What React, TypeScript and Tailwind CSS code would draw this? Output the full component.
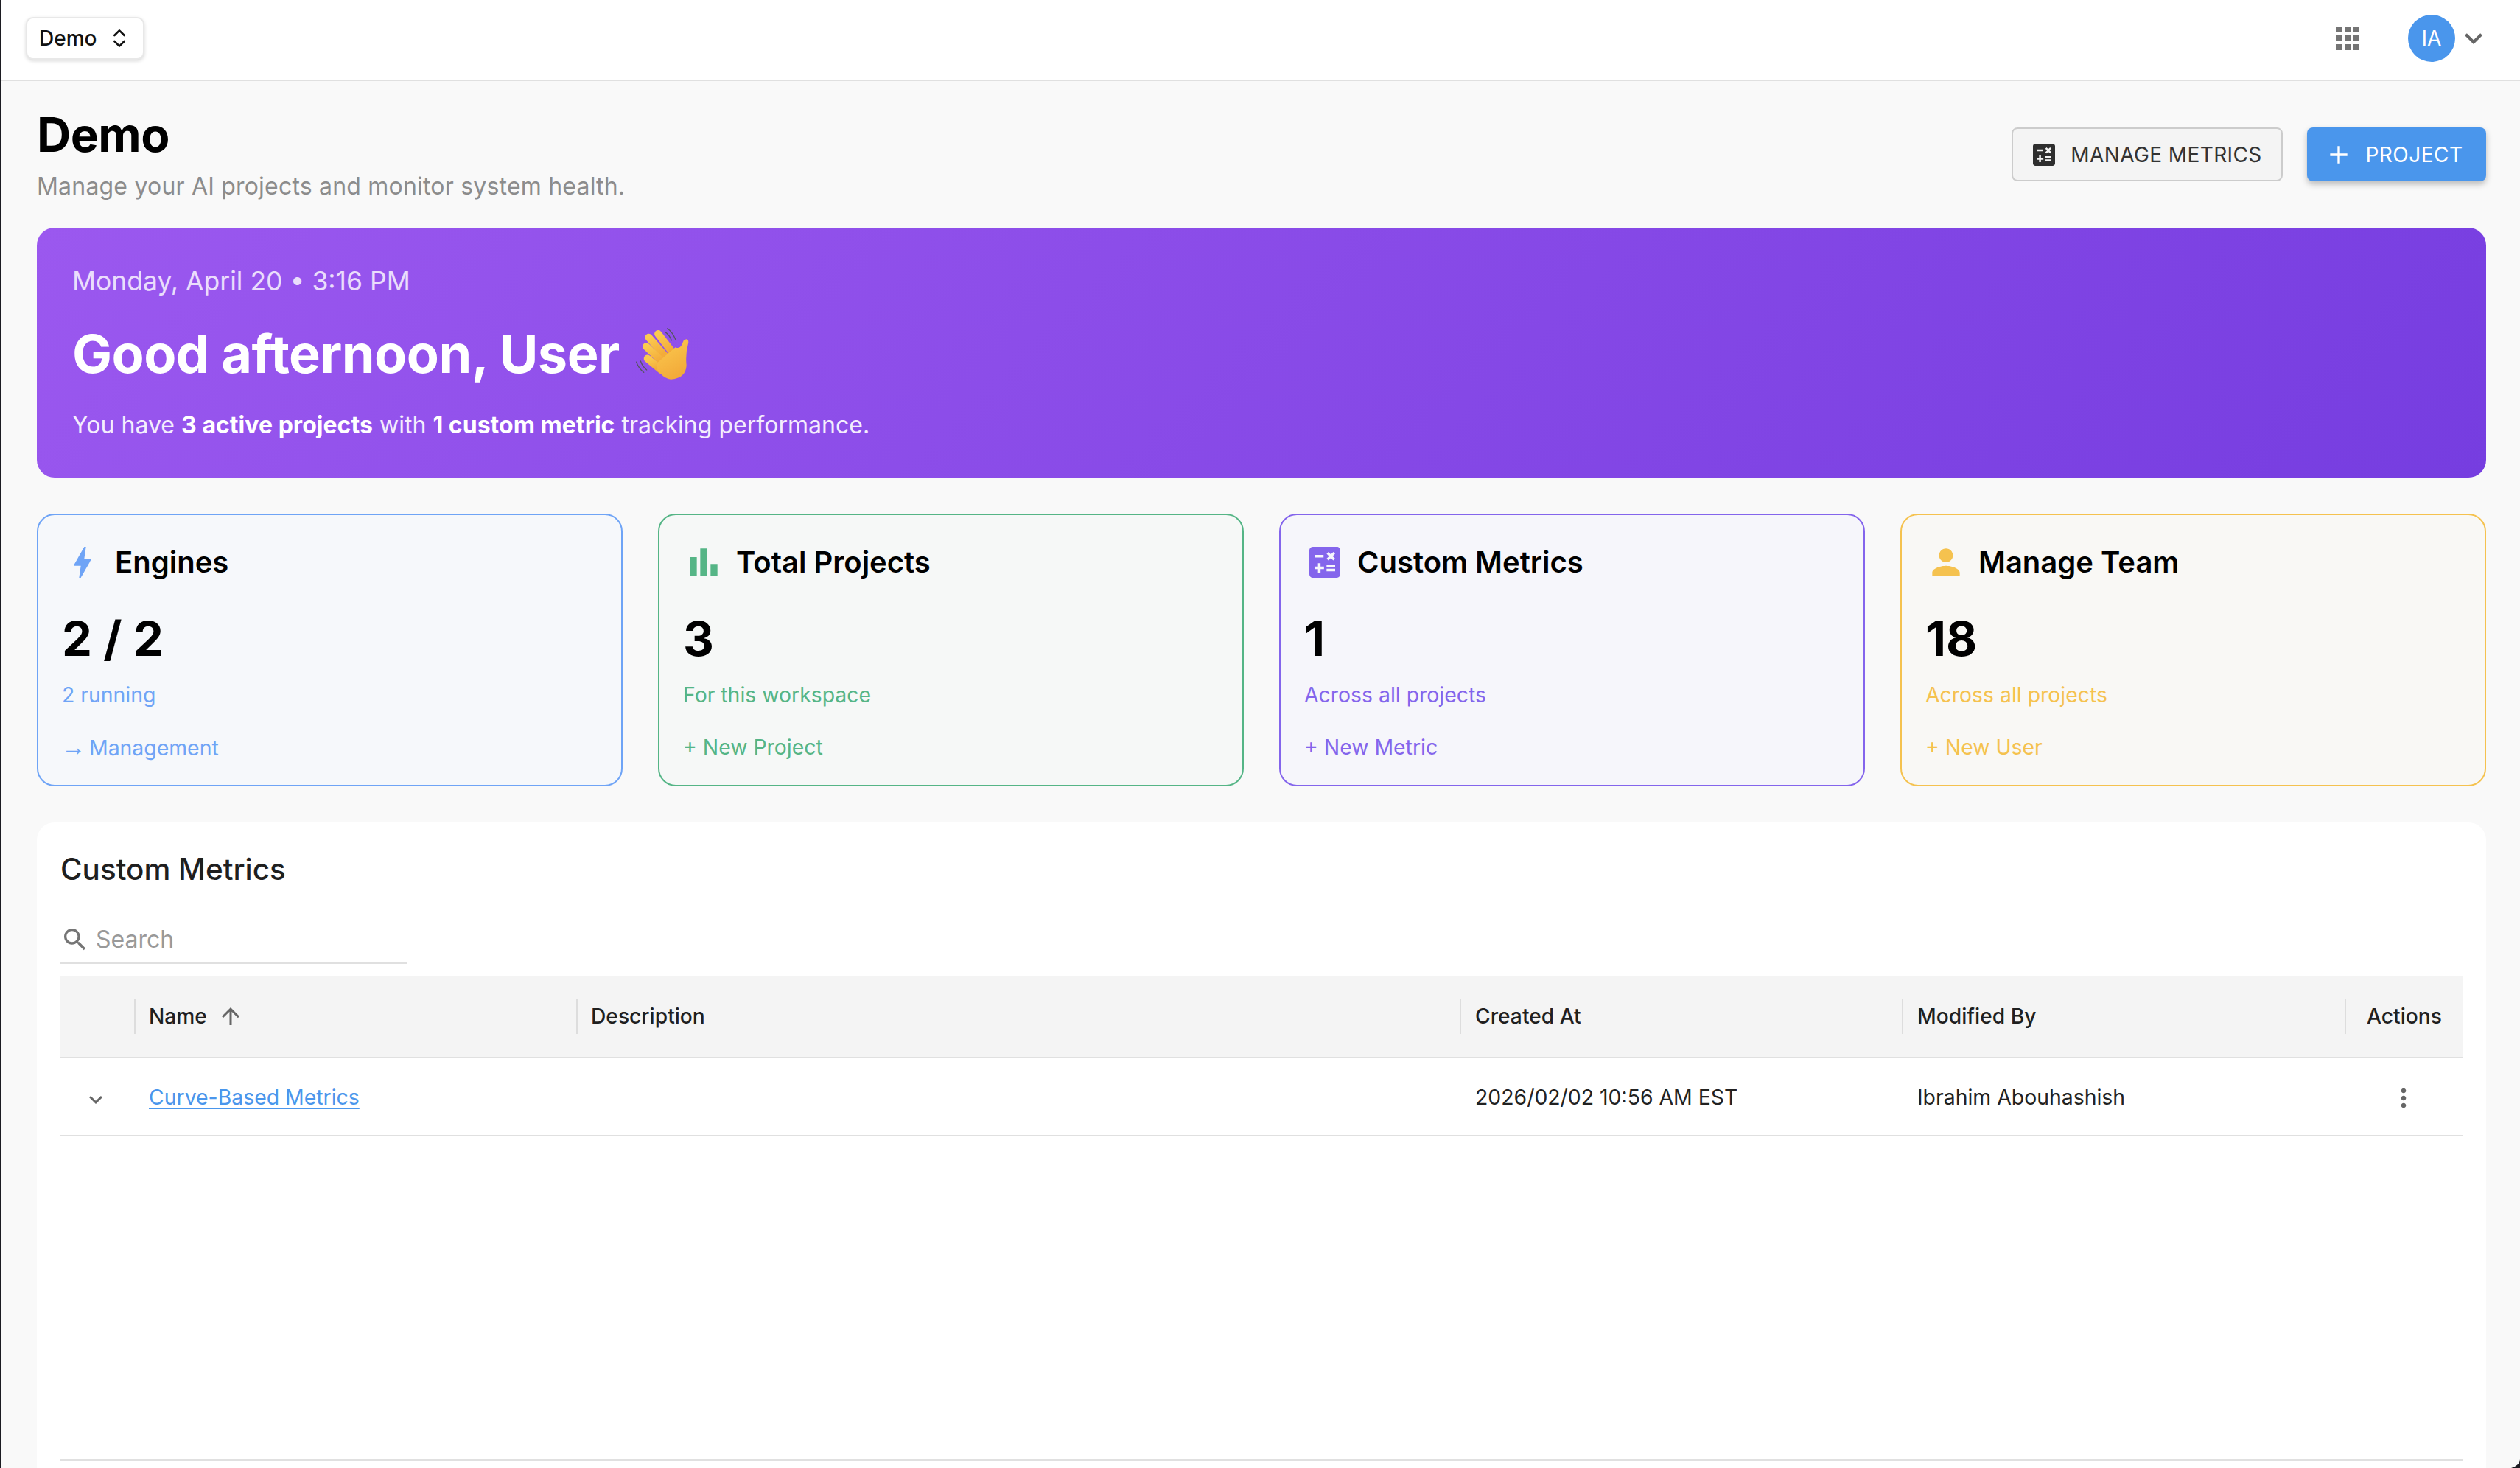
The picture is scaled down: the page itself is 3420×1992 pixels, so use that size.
import React from "react";
import { ChevronsUpDown } from "lucide-react";
import {
  MdAdd,
  MdApps,
  MdArrowUpward,
  MdBolt,
  MdCalculate,
  MdExpandMore,
  MdKeyboardArrowDown,
  MdMoreVert,
  MdPerson,
  MdSearch,
} from "react-icons/md";

const BarChartIcon = ({ className }: { className?: string }) => (
  <svg viewBox="0 0 24 24" fill="currentColor" className={className}>
    <path d="M4 9h4v11H4zm12 4h4v7h-4zm-6-9h4v16h-4z" />
  </svg>
);

const WaveIcon = () => (
  <svg viewBox="310 125 215 215" className="ml-[22px] h-[72px] w-[72px] shrink-0">
    <defs>
      <linearGradient id="hand" x1="0" y1="0" x2="0.4" y2="1">
        <stop offset="0" stopColor="#fbcb50" />
        <stop offset="1" stopColor="#f3ab3a" />
      </linearGradient>
    </defs>
    <g stroke="url(#hand)" strokeWidth="30" strokeLinecap="round" fill="none">
      <path d="M400 152 L462 232" />
      <path d="M362 166 L432 246" />
      <path d="M352 203 L422 270" />
      <path d="M357 252 L412 298" />
    </g>
    <path
      d="M396 270 L470 206 Q486 214 494 200 L504 178 Q522 166 523 186 Q510 232 515 280 Q512 332 452 336 Q420 332 396 296 Z"
      fill="url(#hand)"
    />
    <g stroke="#55555f" strokeWidth="4" strokeLinecap="round" fill="none">
      <path d="M428 144 Q446 156 454 178" />
      <path d="M438 130 Q460 146 471 176" />
      <path d="M329 262 Q336 284 354 298" />
      <path d="M312 266 Q320 290 342 308" />
    </g>
  </svg>
);

const cards = [
  {
    title: "Engines",
    value: "2 / 2",
    sub: "2 running",
    link: (
      <>
        <span className="-ml-[1px] mr-[-3px] text-[33px] [font-family:'Liberation_Sans',sans-serif]">→</span> Management
      </>
    ),
    icon: <MdBolt className="h-[56px] w-[56px]" />,
    box: "border-[#6fa4f6] bg-[#f6f8fb]",
    text: "text-[#6fa4f6]",
  },
  {
    title: "Total Projects",
    value: "3",
    sub: "For this workspace",
    link: "+ New Project",
    icon: <BarChartIcon className="h-[56px] w-[56px]" />,
    box: "border-[#55b586] bg-[#f6f8f7]",
    text: "text-[#55b586]",
  },
  {
    title: "Custom Metrics",
    value: "1",
    sub: "Across all projects",
    link: "+ New Metric",
    icon: <MdCalculate className="h-[56px] w-[56px]" />,
    box: "border-[#8465ec] bg-[#f6f6fb]",
    text: "text-[#8465ec]",
  },
  {
    title: "Manage Team",
    value: "18",
    sub: "Across all projects",
    link: "+ New User",
    icon: <MdPerson className="h-[56px] w-[56px]" />,
    box: "border-[#f5c24f] bg-[#f9f8f5]",
    text: "text-[#f5c24f]",
  },
];

const columns = [
  { label: "Name", pad: "pl-[18px]" },
  { label: "Description", pad: "pl-[18px]" },
  { label: "Created At", pad: "pl-[19px]" },
  { label: "Modified By", pad: "pl-[19px]" },
];
const tableCols = "grid grid-cols-[100px_600px_1199px_600px_601px_160px]";

export default function App() {
  return (
    <div className="relative flex h-[1992px] w-[3420px] flex-col overflow-hidden border-l-2 border-[#1c1c22] bg-[#f9f9f9] text-black [font-family:Inter,sans-serif]">
      <header className="flex h-[110px] shrink-0 items-center border-b-2 border-[#e0e0e0] bg-white pb-[5px] pl-[33px] pr-[39px]">
        <button className="flex h-[58px] w-[161px] items-center justify-between rounded-[10px] border-2 border-[#e8e8e8] bg-white pl-[16px] pr-[16px] text-[28px] font-medium text-[#111] shadow-[0_2px_5px_rgba(0,0,0,0.15)]">
          Demo
          <ChevronsUpDown size={32} strokeWidth={2} />
        </button>
        <MdApps className="ml-auto mt-[1px] h-[48px] w-[48px] text-[#757575]" />
        <div className="ml-[58px] flex h-[64px] w-[64px] items-center justify-center rounded-full bg-[#4a96ec] text-[28px] text-white">
          IA
        </div>
        <MdExpandMore className="ml-[1px] h-[48px] w-[48px] text-[#666]" />
      </header>

      <main className="flex min-h-0 flex-1 flex-col pl-[48px] pr-[46px] pt-[32px]">
        <div className="flex items-center justify-between">
          <div>
            <h1 className="pt-[2px] text-[64px] font-bold leading-[78px] tracking-[-0.5px]">Demo</h1>
            <p className="mt-[7px] text-[32px] leading-[48px] tracking-[0.2px] text-[#8c8c8c]">
              Manage your AI projects and monitor system health.
            </p>
          </div>
          <div className="flex gap-[33px]">
            <button className="flex h-[73px] w-[368px] items-center justify-center gap-[20px] rounded-[8px] border-2 border-[#cccccc] bg-[#f4f4f4] text-[28px] tracking-[0.4px] text-[#333]">
              <MdCalculate className="-mx-[4px] h-[40px] w-[40px] text-[#2e2e2e]" />
              MANAGE METRICS
            </button>
            <button className="flex h-[73px] w-[243px] items-center justify-center gap-[16px] rounded-[8px] bg-[#4a96ec] text-[28px] tracking-[0.5px] text-white shadow-[0_4px_8px_rgba(0,0,0,0.25)]">
              <MdAdd className="-ml-[8px] h-[40px] w-[40px]" />
              PROJECT
            </button>
          </div>
        </div>

        <section className="mt-[32px] rounded-[24px] bg-[linear-gradient(135deg,#9b58ef,#763de0)] px-[48px] pb-[47px] pt-[49px] text-white">
          <p className="text-[35.5px] leading-[48px] text-white/80">Monday, April 20 • 3:16 PM</p>
          <div className="mt-[30px] flex items-center">
            <h2 className="text-[72px] font-bold leading-[88px] tracking-[-0.5px]">Good afternoon, User</h2>
            <WaveIcon />
          </div>
          <p className="mt-[29px] text-[32px] leading-[48px] tracking-[0.03px] text-white/90">
            You have <b className="font-bold text-white">3 active projects</b> with{" "}
            <b className="font-bold text-white">1 custom metric</b> tracking performance.
          </p>
        </section>

        <section className="mt-[49px] grid grid-cols-4 gap-[48px]">
          {cards.map((card) => (
            <div
              key={card.title}
              className={`rounded-[24px] border-2 px-[32px] pb-[31px] pt-[34px] ${card.box}`}
            >
              <div className="flex h-[60px] items-center gap-[16px]">
                <span className={card.text}>{card.icon}</span>
                <span className="text-[40px] font-semibold leading-[60px]">{card.title}</span>
              </div>
              <div className="mt-[35px] text-[65px] font-bold leading-[78px]">{card.value}</div>
              <div className={`mt-[17px] text-[28.4px] leading-[40px] ${card.text}`}>{card.sub}</div>
              <div className={`mt-[31px] h-[40px] text-[28.4px] leading-[40px] ${card.text}`}>{card.link}</div>
            </div>
          ))}
        </section>

        <section className="mt-[49px] flex min-h-0 flex-1 flex-col rounded-t-[24px] bg-white px-[32px] pb-[10px] pt-[36px]">
          <h3 className="text-[40.4px] font-medium leading-[56px] text-[#1f1f1f]">Custom Metrics</h3>
          <div className="mt-[36px] flex h-[64px] w-[471px] items-center gap-[8px] border-b-2 border-[#e0e0e0] text-[32px] text-[#999]">
            <MdSearch className="h-[40px] w-[40px] text-[#757575]" />
            Search
          </div>

          <div className="mt-[16px] flex min-h-0 flex-1 flex-col border-b-2 border-[#e0e0e0]">
            <div className={`${tableCols} h-[112px] shrink-0 items-center border-b-2 border-[#e0e0e0] bg-[#f4f4f4] text-[28.2px] font-medium text-[#1f1f1f]`}>
              <div />
              {columns.map((col) => (
                <div key={col.label} className={`flex h-[48px] items-center border-l-2 border-[#dddddd] ${col.pad}`}>
                  {col.label}
                  {col.label === "Name" && <MdArrowUpward className="ml-[14px] h-[36px] w-[36px] text-[#666]" />}
                </div>
              ))}
              <div className="flex h-[48px] items-center justify-center border-l-2 border-[#dddddd]">Actions</div>
            </div>
            <div className={`${tableCols} h-[106px] shrink-0 items-center border-b-2 border-[#e0e0e0] pt-[3px] text-[28.4px] text-[#222]`}>
              <div className="pl-[30px] pt-[4px]">
                <MdKeyboardArrowDown className="h-[36px] w-[36px] text-[#666]" />
              </div>
              <div className="pl-[20px]">
                <a className="text-[#4a96ec] underline underline-offset-[4px]">Curve-Based Metrics</a>
              </div>
              <div />
              <div className="pl-[21px]">2026/02/02 10:56 AM EST</div>
              <div className="pl-[21px]">Ibrahim Abouhashish</div>
              <div className="flex justify-center">
                <MdMoreVert className="h-[40px] w-[40px] text-[#666]" />
              </div>
            </div>
          </div>
        </section>
      </main>

      <svg viewBox="0 0 12 12" className="absolute bottom-0 right-0 h-[12px] w-[12px] text-[#1c1c22]" fill="currentColor">
        <path d="M12 0 Q12 8 0 12 L12 12 Z" />
      </svg>
    </div>
  );
}
